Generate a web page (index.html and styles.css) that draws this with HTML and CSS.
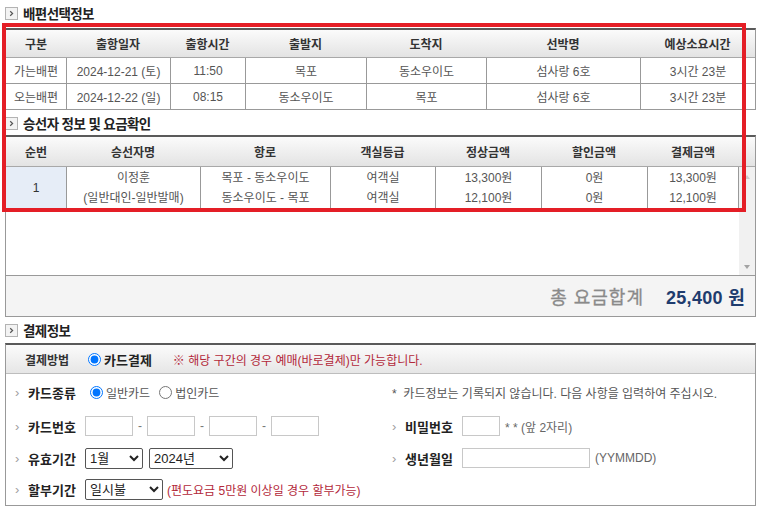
FILE: index.html
```html
<!DOCTYPE html>
<html lang="ko">
<head>
<meta charset="utf-8">
<title>배편선택정보</title>
<link rel="stylesheet" href="styles.css">
</head>
<body>
<div class="page">
  <h2 class="sec-title">
    <svg class="sec-icon" viewBox="0 0 13 13"><rect x="0.5" y="0.5" width="12" height="12" fill="#f3f3f3" stroke="#b3b3b3"/><path d="M5.2 4.2 L7.6 6.5 L5.2 8.8" fill="none" stroke="#555" stroke-width="1.2"/></svg>
    배편선택정보
  </h2>
  <div class="tbl ship">
    <div class="row head">
      <div class="cell">구분</div>
      <div class="cell">출항일자</div>
      <div class="cell">출항시간</div>
      <div class="cell">출발지</div>
      <div class="cell">도착지</div>
      <div class="cell">선박명</div>
      <div class="cell">예상소요시간</div>
    </div>
    <div class="row body-row">
      <div class="cell">가는배편</div>
      <div class="cell">2024-12-21 (토)</div>
      <div class="cell">11:50</div>
      <div class="cell">목포</div>
      <div class="cell">동소우이도</div>
      <div class="cell">섬사랑 6호</div>
      <div class="cell">3시간 23분</div>
    </div>
    <div class="row body-row">
      <div class="cell">오는배편</div>
      <div class="cell">2024-12-22 (일)</div>
      <div class="cell">08:15</div>
      <div class="cell">동소우이도</div>
      <div class="cell">목포</div>
      <div class="cell">섬사랑 6호</div>
      <div class="cell">3시간 23분</div>
    </div>
  </div>

  <h2 class="sec-title t2">
    <svg class="sec-icon" viewBox="0 0 13 13"><rect x="0.5" y="0.5" width="12" height="12" fill="#f3f3f3" stroke="#b3b3b3"/><path d="M5.2 4.2 L7.6 6.5 L5.2 8.8" fill="none" stroke="#555" stroke-width="1.2"/></svg>
    승선자 정보 및 요금확인
  </h2>
  <div class="tbl pax">
    <div class="row head pax-head">
      <div class="cell">순번</div>
      <div class="cell">승선자명</div>
      <div class="cell">항로</div>
      <div class="cell">객실등급</div>
      <div class="cell">정상금액</div>
      <div class="cell">할인금액</div>
      <div class="cell">결제금액</div>
      <div class="cell"></div>
    </div>
    <div class="pax-scroll">
      <div class="pax-list">
        <div class="row body-row pax-row">
          <div class="cell seq">1</div>
          <div class="cell multi"><span>이정훈</span><span>(일반대인-일반발매)</span></div>
          <div class="cell multi"><span>목포 - 동소우이도</span><span>동소우이도 - 목포</span></div>
          <div class="cell multi"><span>여객실</span><span>여객실</span></div>
          <div class="cell multi"><span>13,300원</span><span>12,100원</span></div>
          <div class="cell multi"><span>0원</span><span>0원</span></div>
          <div class="cell multi last"><span>13,300원</span><span>12,100원</span></div>
        </div>
      </div>
      <div class="scrollbar">
        <span class="arrow up"></span>
        <span class="arrow down"></span>
      </div>
    </div>
    <div class="total">
      <span class="total-label">총 요금합계</span>
      <span class="total-value">25,400 원</span>
    </div>
  </div>

  <h2 class="sec-title t3">
    <svg class="sec-icon" viewBox="0 0 13 13"><rect x="0.5" y="0.5" width="12" height="12" fill="#f3f3f3" stroke="#b3b3b3"/><path d="M5.2 4.2 L7.6 6.5 L5.2 8.8" fill="none" stroke="#555" stroke-width="1.2"/></svg>
    결제정보
  </h2>
  <div class="tbl pay">
    <div class="pay-head">
      <span class="pay-label">결제방법</span>
      <label class="radio-item strong"><input type="radio" name="method" checked>카드결제</label>
      <span class="notice">※ 해당 구간의 경우 예매(바로결제)만 가능합니다.</span>
    </div>
    <div class="pay-body">
      <div class="field">
        <span class="chev">›</span><span class="flabel">카드종류</span>
        <label class="radio-item"><input type="radio" name="ctype" checked>일반카드</label>
        <label class="radio-item second"><input type="radio" name="ctype">법인카드</label>
      </div>
      <div class="field right">
        <span class="info">*&nbsp; 카드정보는 기록되지 않습니다. 다음 사항을 입력하여 주십시오.</span>
      </div>

      <div class="field">
        <span class="chev">›</span><span class="flabel">카드번호</span>
        <input class="txt card" type="text"><span class="dash">-</span>
        <input class="txt card" type="text"><span class="dash">-</span>
        <input class="txt card" type="text"><span class="dash">-</span>
        <input class="txt card" type="text">
      </div>
      <div class="field right">
        <span class="chev">›</span><span class="flabel">비밀번호</span>
        <input class="txt pw" type="text"><span class="hint">* * (앞 2자리)</span>
      </div>

      <div class="field">
        <span class="chev">›</span><span class="flabel">유효기간</span>
        <select class="sel month"><option>1월</option></select>
        <select class="sel year"><option>2024년</option></select>
      </div>
      <div class="field right">
        <span class="chev">›</span><span class="flabel">생년월일</span>
        <input class="txt birth" type="text"><span class="hint">(YYMMDD)</span>
      </div>

      <div class="field">
        <span class="chev">›</span><span class="flabel">할부기간</span>
        <select class="sel inst"><option>일시불</option></select>
        <span class="notice small">(편도요금 5만원 이상일 경우 할부가능)</span>
      </div>
      <div class="field right"></div>
    </div>
  </div>

  <div class="highlight"></div>
</div>
</body>
</html>
```
FILE: styles.css
```css
* { box-sizing: border-box; }

body {
  margin: 0;
  background: #fff;
  font-family: "Liberation Sans", "Noto Sans CJK KR", sans-serif;
  font-size: 12px;
  color: #555;
}

.page {
  position: relative;
  width: 756px;
  padding: 2px 0 0 5px;
}

/* section titles */
.sec-title {
  margin: 0 0 4px;
  height: 22px;
  display: flex;
  align-items: center;
  gap: 5px;
  font-size: 13.5px;
  font-weight: bold;
  color: #222;
  letter-spacing: -0.6px;
}
.sec-title.t2 { margin: 1px 0 0; height: 24px; }
.sec-title.t3 { margin: 2px 0 2px; height: 22px; }
.sec-icon { width: 13px; height: 13px; flex: none; }

/* tables */
.tbl {
  border-top: 2px solid #5a5a5a;
  border-left: 1px solid #999;
  border-right: 1px solid #999;
}
.row { display: grid; }
.cell {
  display: flex;
  align-items: center;
  justify-content: center;
  white-space: nowrap;
}
.head {
  background: linear-gradient(#fbfbfb, #e3e3e3);
  border-bottom: 1px solid #a8a8a8;
  font-weight: bold;
  color: #333;
}
.body-row .cell + .cell { border-left: 1px solid #999; }

.ship .row { grid-template-columns: 60px 104px 75px 121px 120px 154px 115px; }
.ship .head { height: 28px; }
.ship .body-row { height: 26px; border-bottom: 1px solid #999; }

/* passenger table */
.pax-head { height: 30px; grid-template-columns: 60px 134px 130px 105px 106px 106px 92px 16px; }
.pax-scroll { display: flex; height: 108px; }
.pax-list { flex: 1; }
.pax-row {
  grid-template-columns: 60px 134px 130px 105px 106px 106px 92px;
  height: 42px;
  border-bottom: 1px solid #999;
}
.pax-row .seq { background: #e6edf7; color: #333; }
.pax-row .last { border-right: 1px solid #999; }
.multi { flex-direction: column; line-height: 20px; }

.scrollbar {
  width: 16px;
  background: #f1f1f1;
  display: flex;
  flex-direction: column;
  justify-content: space-between;
  align-items: center;
  padding: 8px 0 6px;
}
.arrow { width: 0; height: 0; border-left: 3.5px solid transparent; border-right: 3.5px solid transparent; }
.arrow.up { border-bottom: 4px solid #cdcdcd; }
.arrow.down { border-top: 4px solid #a3a3a3; }

.total {
  height: 42px;
  background: #f4f4f4;
  border-top: 1px solid #999;
  border-bottom: 1px solid #999;
  display: flex;
  align-items: center;
  justify-content: flex-end;
  gap: 22px;
  padding-right: 10px;
  font-size: 18px;
  font-weight: bold;
}
.total-label { color: #8a8a8a; letter-spacing: 1px; font-weight: normal; -webkit-text-stroke: 0.3px #8a8a8a; }
.total-value { color: #1f3c6e; letter-spacing: 0.3px; }

/* payment */
.pay { border-bottom: 1px solid #999; }
.pay-head {
  height: 29px;
  background: linear-gradient(#fbfbfb, #e6e6e6);
  border-bottom: 1px solid #bdbdbd;
  display: flex;
  align-items: center;
  padding-left: 19px;
}
.pay-label { width: 63px; font-weight: bold; color: #333; }
.radio-item {
  display: flex;
  align-items: center;
  gap: 3px;
  color: #555;
}
.radio-item input { margin: 0; width: 13px; height: 13px; }
.radio-item.strong { font-weight: bold; color: #222; font-size: 13px; }
.radio-item.second { margin-left: 9px; }
.notice { color: #b3283a; margin-left: 21px; }
.notice.small { margin-left: 4px; }

.pay-body {
  display: grid;
  grid-template-columns: 385px 1fr;
  grid-template-rows: 36px 32px 32px 31px;
}
.field {
  display: flex;
  align-items: center;
  padding-left: 9px;
}
.field.right { padding-left: 1px; }
.chev { width: 13px; color: #a0a0a0; font-size: 13px; }
.flabel { width: 57px; font-weight: bold; color: #222; font-size: 13px; }
.field .radio-item:first-of-type { margin-left: 5px; }
.info { color: #555; }

.txt {
  height: 20px;
  border: 1px solid #c8c8c8;
  padding: 0;
  margin: 0;
  background: #fff;
}
.txt.card { width: 48px; }
.txt.pw { width: 38px; }
.txt.birth { width: 128px; }
.dash { width: 14px; text-align: center; color: #777; }
.hint { margin-left: 5px; color: #666; }

.sel {
  height: 21px;
  margin: 0 6px 0 0;
  font-family: "Liberation Sans", "Noto Sans CJK KR", sans-serif;
  font-size: 13px;
  color: #222;
  border: 1px solid #555;
  border-radius: 2px;
  background: #fff;
}
.sel.month { width: 58px; }
.sel.year { width: 84px; }
.sel.inst { width: 78px; margin-right: 0; }

/* red annotation box over the tables */
.highlight {
  position: absolute;
  left: 2px;
  top: 23px;
  width: 744px;
  height: 189px;
  border: 4px solid #e41e26;
  pointer-events: none;
}
```
